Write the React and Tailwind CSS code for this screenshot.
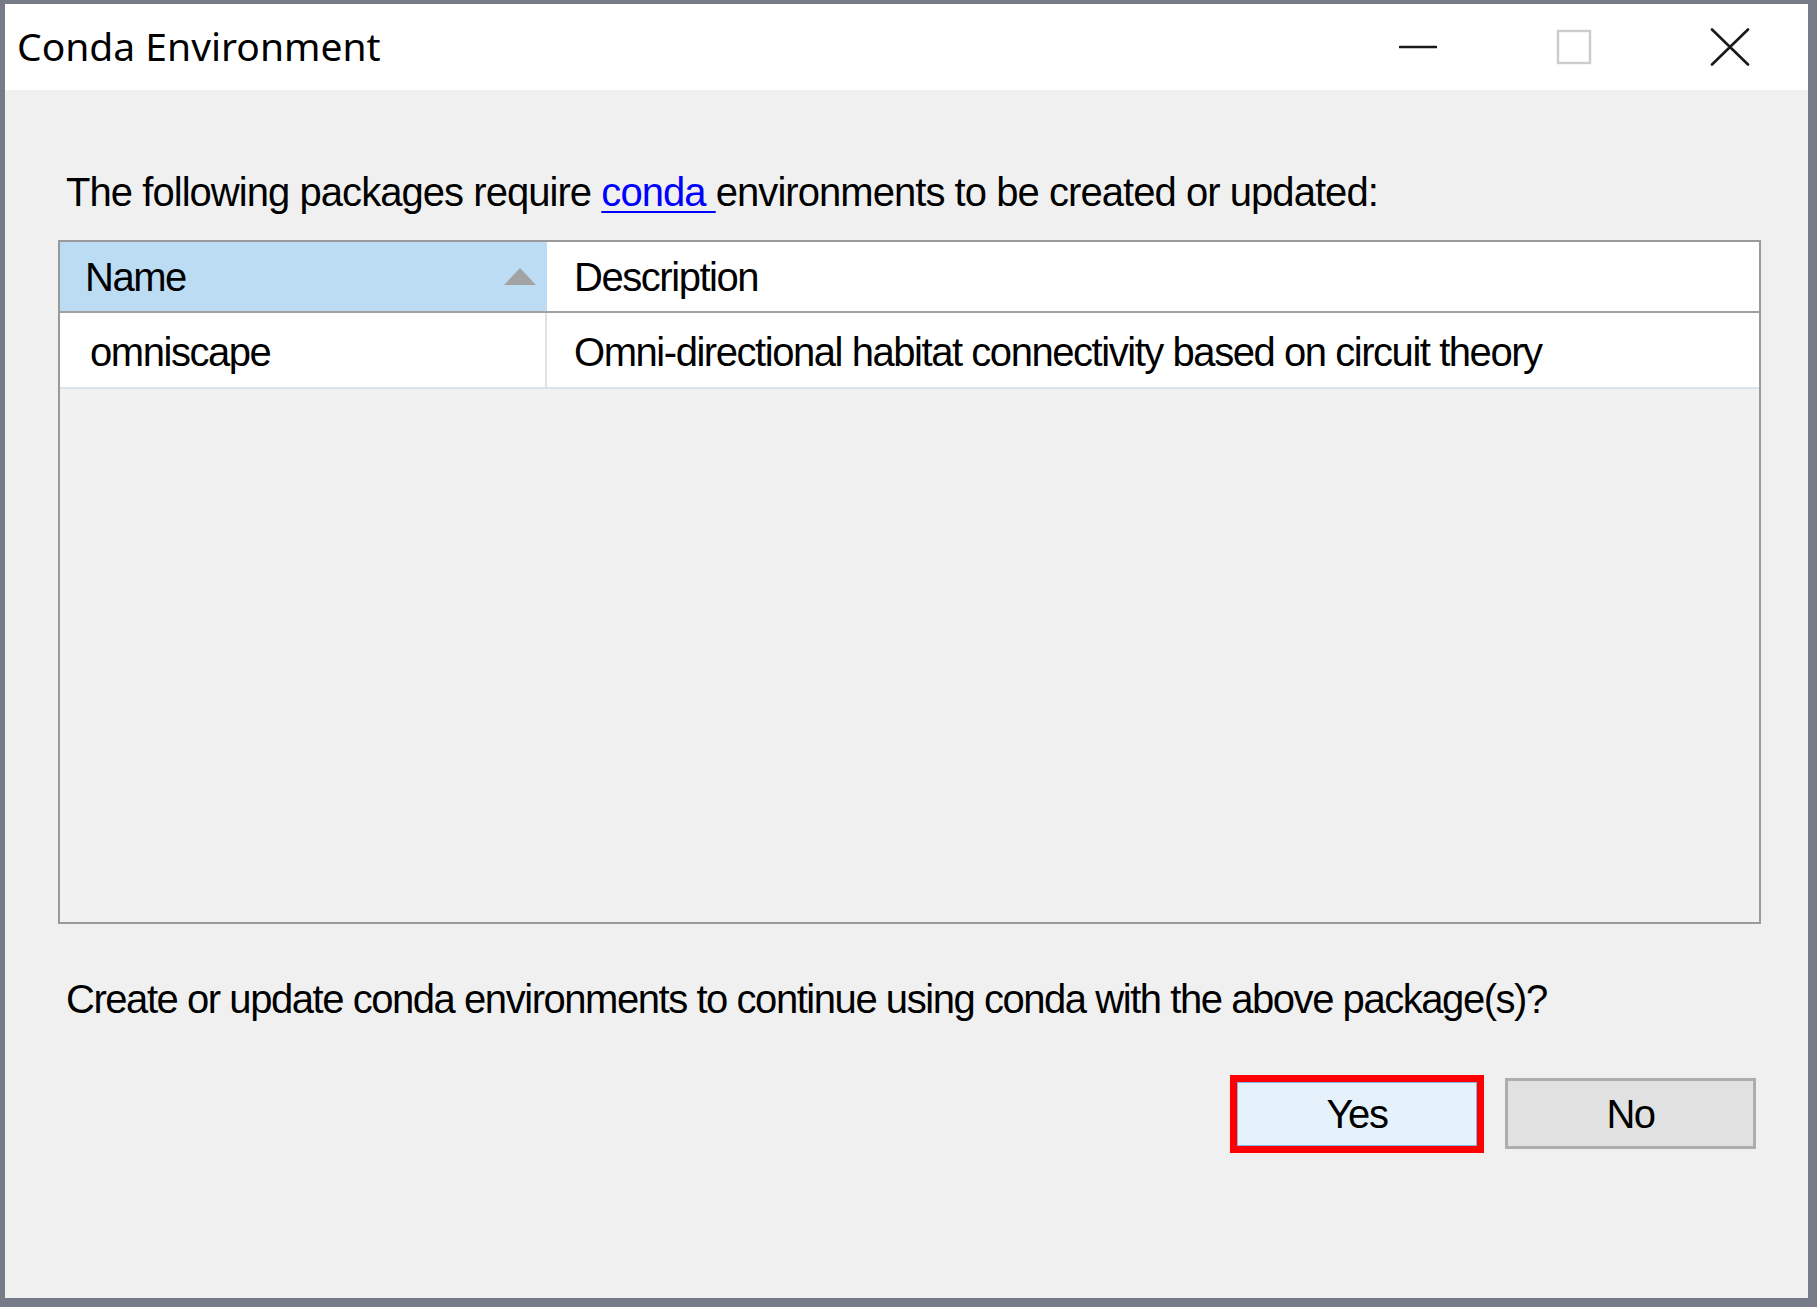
import { useState } from 'react';

const body = { fontFamily: '"Liberation Sans", Arial, sans-serif' };
const title = { fontFamily: '"Noto Sans", "Open Sans", sans-serif' };

function TitleButtons() {
  return (
    <div className="flex items-center h-full">
      <div className="w-[156px] h-full flex items-center justify-center">
        <svg width="38" height="6" viewBox="0 0 38 6">
          <path d="M1 3H37" stroke="#1a1a1a" strokeWidth="2.6" strokeLinecap="round" />
        </svg>
      </div>
      <div className="w-[156px] h-full flex items-center justify-center">
        <svg width="36" height="36" viewBox="0 0 36 36">
          <rect x="2" y="2" width="32" height="32" fill="none" stroke="#cccccc" strokeWidth="2.4" />
        </svg>
      </div>
      <div className="w-[156px] h-full flex items-center justify-center">
        <svg width="40" height="38" viewBox="0 0 40 38">
          <path d="M2 1.5L38 36.5M38 1.5L2 36.5" stroke="#1a1a1a" strokeWidth="2.6" strokeLinecap="round" />
        </svg>
      </div>
    </div>
  );
}

export default function App() {
  const [rows] = useState([
    { name: 'omniscape', description: 'Omni-directional habitat connectivity based on circuit theory' },
  ]);

  return (
    <div className="w-[1817px] h-[1307px] bg-[#f0f0f0] border-t-[4px] border-l-[5px] border-r-[9px] border-b-[9px] border-[#767b87] flex flex-col text-black">
      <div className="h-[86px] bg-white flex items-center justify-between pl-[12px] pr-0">
        <div style={title} className="text-[39px] leading-none pb-[4px]">Conda Environment</div>
        <TitleButtons />
      </div>

      <div style={body} className="flex-1 flex flex-col pl-[53px] pr-[47px] text-[40px] leading-[46px] tracking-[-1.45px]">
        <p className="mt-[79px] pl-[8px] tracking-[-0.95px]">
          The following packages require{' '}
          <span className="text-[#0000ff] underline decoration-[2px] underline-offset-[5px]">conda </span>
          environments to be created or updated:
        </p>

        <div className="mt-[25px] h-[684px] border-[2px] border-[#9a9a9a] bg-[#f1f1f1] flex flex-col">
          <div className="h-[71px] flex border-b-[2px] border-[#a0a0a0] bg-white">
            <div className="w-[487px] bg-[#bcdcf4] flex items-center justify-between pl-[25px] pr-[11px]">
              <span>Name</span>
              <svg width="32" height="17" viewBox="0 0 32 17">
                <path d="M16 0L32 17H0Z" fill="#a3a3a3" />
              </svg>
            </div>
            <div className="flex-1 flex items-center pl-[27px]">Description</div>
          </div>
          {rows.map((r) => (
            <div key={r.name} className="h-[76px] flex bg-white border-b-[2px] border-[#dde3ee]">
              <div className="w-[487px] flex items-center pl-[30px] pt-[3px] border-r-[2px] border-[#dde1ea]">{r.name}</div>
              <div className="flex-1 flex items-center pl-[27px] pt-[3px]">{r.description}</div>
            </div>
          ))}
        </div>

        <p className="mt-[52px] pl-[8px]">
          Create or update conda environments to continue using conda with the above package(s)?
        </p>

        <div className="mt-[53px] flex justify-end gap-[21px] pr-[5px]">
          <button className="w-[254px] h-[78px] border-[7px] border-[#ff0000] bg-[#e5f1fb] flex items-center justify-center">
            <span className="w-full h-full border border-[#7ab8e8] flex items-center justify-center">Yes</span>
          </button>
          <button className="w-[251px] h-[71px] mt-[3px] border-[3px] border-[#adadad] bg-[#e1e1e1] flex items-center justify-center">
            No
          </button>
        </div>
      </div>
    </div>
  );
}
